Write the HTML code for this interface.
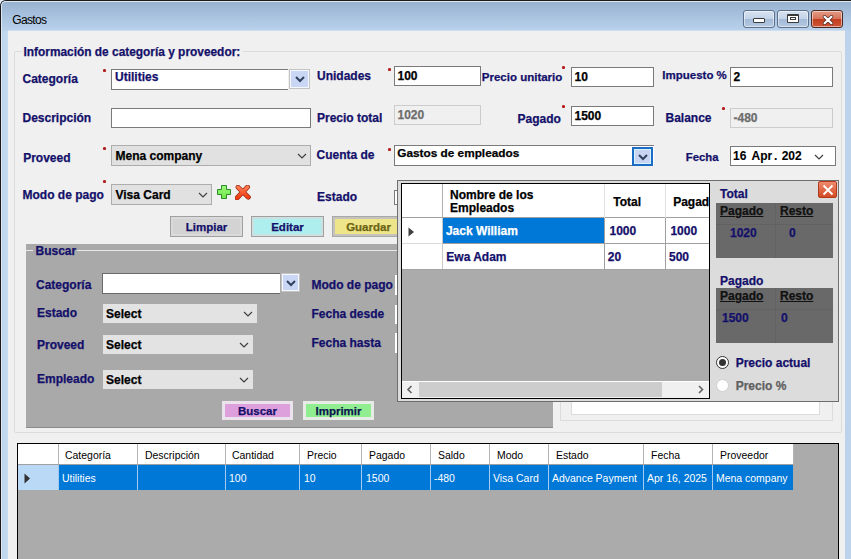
<!DOCTYPE html>
<html><head><meta charset="utf-8"><style>
html,body{margin:0;padding:0;width:851px;height:559px;overflow:hidden;background:#f0f0f0}
body{position:relative;font-family:"Liberation Sans", sans-serif}
div,svg{position:absolute}
.t{white-space:nowrap;-webkit-text-stroke:0.25px currentColor}
u{text-decoration-thickness:1px;text-underline-offset:1px}
</style></head><body>
<div style="left:0;top:0;width:851px;height:559px;background:#e8eef4"></div>
<div style="left:0;top:0;width:851px;height:559px;background:#bcd3eb;border-top-left-radius:6px"></div>
<div style="left:0;top:0;width:851px;height:31px;background:linear-gradient(#96b0cf,#bad2ec);border-top-left-radius:6px"></div>
<div style="left:1px;top:31px;width:7px;height:528px;background:linear-gradient(90deg,#bcd3eb,#c6dbf0)"></div>
<div style="left:0;top:0;width:851px;height:559px;border-left:1px solid #1a1a1a;border-top:1px solid #1a1a1a;border-top-left-radius:6px;box-sizing:border-box"></div>
<div style="left:1px;top:1px;width:850px;height:558px;border-left:1px solid #dfe8f2;border-top:1px solid #dfe8f2;border-top-left-radius:5px;box-sizing:border-box"></div>
<div style="left:8px;top:30px;width:837px;height:1px;background:#cfdff0"></div>
<div class="t" style="left:12.20px;top:14.14px;font-size:12px;line-height:12px;font-weight:normal;color:#000;-webkit-text-stroke:0;letter-spacing:-0.62px">Gastos</div>
<div style="left:743px;top:10px;width:32px;height:18px;border:1px solid #5d6f89;border-radius:3px;box-sizing:border-box;background:linear-gradient(#d6e2f0 0%,#c3d3e8 50%,#a3b9d6 51%,#b5c9e2 100%);box-shadow:inset 0 0 0 1px rgba(255,255,255,0.5)"><div style="left:9px;top:7px;width:12px;height:5px;background:#fff;border:1px solid #3a3a3a;border-radius:1px;box-sizing:border-box"></div></div>
<div style="left:777px;top:10px;width:32px;height:18px;border:1px solid #5d6f89;border-radius:3px;box-sizing:border-box;background:linear-gradient(#d6e2f0 0%,#c3d3e8 50%,#a3b9d6 51%,#b5c9e2 100%);box-shadow:inset 0 0 0 1px rgba(255,255,255,0.5)"><div style="left:9px;top:3px;width:12px;height:9px;background:#fff;border:1px solid #3a3a3a;border-top-width:2px;border-radius:1px;box-sizing:border-box"><div style="left:2px;top:1px;width:6px;height:3px;border:1px solid #3a3a3a;box-sizing:border-box;background:#fff"></div></div></div>
<div style="left:811px;top:10px;width:32px;height:18px;border:1px solid #4a2a20;border-radius:3px;box-sizing:border-box;background:linear-gradient(#e39a86 0%,#d8735a 50%,#bf3f1f 51%,#cf5536 100%);box-shadow:inset 0 0 0 1px rgba(255,255,255,0.5)"><svg style="position:absolute;left:9px;top:2px" width="14" height="13"><path d="M3.6,3.8 L10.4,10.2 M10.4,3.8 L3.6,10.2" stroke="#4a2a2a" stroke-width="3.6" stroke-linecap="round"/><path d="M3.6,3.8 L10.4,10.2 M10.4,3.8 L3.6,10.2" stroke="#fff" stroke-width="2.2" stroke-linecap="round"/></svg></div>
<div style="left:8px;top:31px;width:837px;height:528px;background:#f0f0f0"></div>
<div style="left:14px;top:51px;width:828px;height:382px;border:1px solid #dcdcdc;box-sizing:border-box;border-radius:2px"></div>
<div style="left:22px;top:44px;width:221px;height:14px;background:#f0f0f0"></div>
<div class="t" style="left:23.50px;top:46.63px;font-size:11.9px;line-height:11.9px;font-weight:bold;color:#14106a;">Información de categoría y proveedor:</div>
<div class="t" style="left:22.50px;top:72.84px;font-size:12px;line-height:12px;font-weight:bold;color:#14106a;">Categoría</div>
<div style="left:103px;top:69px;width:3px;height:3px;background:#b22020;border-radius:50%;box-shadow:0 0 0.6px #c04040"></div>
<div style="left:111px;top:69px;width:177px;height:21px;background:#fff;border:1px solid #7a7a7a;border-right:none;box-sizing:border-box"></div>
<div class="t" style="left:115.00px;top:70.84px;font-size:12px;line-height:12px;font-weight:bold;color:#14106a;">Utilities</div>
<div style="left:289px;top:69px;width:21px;height:20px;background:#c9d6f4;border:1px solid #c3c3c3;box-shadow:inset 0 0 0 1px #f4f8ff;box-sizing:border-box"></div>
<svg style="position:absolute;left:293.5px;top:74.0px" width="12" height="10"><polyline points="2,3 6,7 10,3" fill="none" stroke="#2f4260" stroke-width="2"/></svg>
<div class="t" style="left:317.00px;top:69.84px;font-size:12px;line-height:12px;font-weight:bold;color:#14106a;">Unidades</div>
<div style="left:388px;top:68px;width:3px;height:3px;background:#b22020;border-radius:50%;box-shadow:0 0 0.6px #c04040"></div>
<div style="left:394px;top:66px;width:87px;height:20px;background:#fff;border:1px solid #7a7a7a;box-sizing:border-box"></div>
<div class="t" style="left:397.50px;top:69.84px;font-size:12px;line-height:12px;font-weight:bold;color:#000;">100</div>
<div class="t" style="left:481.80px;top:71.97px;font-size:11.5px;line-height:11.5px;font-weight:bold;color:#14106a;">Precio unitario</div>
<div style="left:562px;top:66px;width:3px;height:3px;background:#b22020;border-radius:50%;box-shadow:0 0 0.6px #c04040"></div>
<div style="left:571px;top:67px;width:83px;height:20px;background:#fff;border:1px solid #7a7a7a;box-sizing:border-box"></div>
<div class="t" style="left:574.50px;top:70.84px;font-size:12px;line-height:12px;font-weight:bold;color:#000;">10</div>
<div class="t" style="left:662.30px;top:69.67px;font-size:11.5px;line-height:11.5px;font-weight:bold;color:#14106a;">Impuesto %</div>
<div style="left:730px;top:67px;width:103px;height:20px;background:#fff;border:1px solid #7a7a7a;box-sizing:border-box"></div>
<div class="t" style="left:733.50px;top:70.84px;font-size:12px;line-height:12px;font-weight:bold;color:#000;">2</div>
<div class="t" style="left:22.50px;top:112.34px;font-size:12px;line-height:12px;font-weight:bold;color:#14106a;">Descripción</div>
<div style="left:111px;top:108px;width:200px;height:20px;background:#fff;border:1px solid #7a7a7a;box-sizing:border-box"></div>
<div class="t" style="left:317.00px;top:111.84px;font-size:12px;line-height:12px;font-weight:bold;color:#14106a;">Precio total</div>
<div style="left:394px;top:105px;width:87px;height:20px;background:#f0f0f0;border:1px solid #cccccc;box-sizing:border-box"></div>
<div class="t" style="left:397.50px;top:108.84px;font-size:12px;line-height:12px;font-weight:bold;color:#6d6d6d;">1020</div>
<div class="t" style="left:517.50px;top:112.84px;font-size:12px;line-height:12px;font-weight:bold;color:#14106a;">Pagado</div>
<div style="left:562px;top:105px;width:3px;height:3px;background:#b22020;border-radius:50%;box-shadow:0 0 0.6px #c04040"></div>
<div style="left:571px;top:106px;width:83px;height:20px;background:#fff;border:1px solid #7a7a7a;box-sizing:border-box"></div>
<div class="t" style="left:574.50px;top:109.84px;font-size:12px;line-height:12px;font-weight:bold;color:#000;">1500</div>
<div class="t" style="left:665.50px;top:112.24px;font-size:12px;line-height:12px;font-weight:bold;color:#14106a;">Balance</div>
<div style="left:722px;top:107px;width:3px;height:3px;background:#b22020;border-radius:50%;box-shadow:0 0 0.6px #c04040"></div>
<div style="left:730px;top:108px;width:103px;height:20px;background:#f0f0f0;border:1px solid #cccccc;box-sizing:border-box"></div>
<div class="t" style="left:733.50px;top:111.84px;font-size:12px;line-height:12px;font-weight:bold;color:#6d6d6d;">-480</div>
<div class="t" style="left:23.20px;top:151.54px;font-size:12px;line-height:12px;font-weight:bold;color:#14106a;">Proveed</div>
<div style="left:103px;top:147px;width:3px;height:3px;background:#b22020;border-radius:50%;box-shadow:0 0 0.6px #c04040"></div>
<div style="left:111px;top:145px;width:200px;height:21px;background:#e1e1e1;border:1px solid #adadad;box-sizing:border-box"></div>
<div class="t" style="left:115.50px;top:149.84px;font-size:12px;line-height:12px;font-weight:bold;color:#000;">Mena company</div>
<svg style="position:absolute;left:297px;top:153px" width="10" height="6"><polyline points="1,1 5.0,5 9,1" fill="none" stroke="#404040" stroke-width="1.2"/></svg>
<div class="t" style="left:316.50px;top:148.84px;font-size:12px;line-height:12px;font-weight:bold;color:#14106a;">Cuenta de</div>
<div style="left:388px;top:148px;width:3px;height:3px;background:#b22020;border-radius:50%;box-shadow:0 0 0.6px #c04040"></div>
<div style="left:394px;top:145px;width:260px;height:21px;background:#fff;border:1px solid #7a7a7a;border-right:none;border-bottom:none;box-sizing:border-box"></div>
<div style="left:394px;top:165px;width:238px;height:1px;background:#7a7a7a"></div>
<div class="t" style="left:397.30px;top:147.51px;font-size:11.8px;line-height:11.8px;font-weight:bold;color:#000;">Gastos de empleados</div>
<div style="left:632px;top:147px;width:21px;height:19px;background:#c9d4f2;border:2px solid #1a6cc4;box-shadow:inset 0 0 0 1px #d6f2ff;box-sizing:border-box"></div>
<svg style="position:absolute;left:636.5px;top:151.5px" width="12" height="10"><polyline points="2,3 6,7 10,3" fill="none" stroke="#2f4260" stroke-width="2"/></svg>
<div class="t" style="left:685.80px;top:151.73px;font-size:11.3px;line-height:11.3px;font-weight:bold;color:#14106a;">Fecha</div>
<div style="left:730px;top:146px;width:106px;height:20px;background:#fff;border:1px solid #7a7a7a;box-sizing:border-box"></div>
<div class="t" style="left:733.00px;top:149.84px;font-size:12px;line-height:12px;font-weight:bold;color:#000;-webkit-text-stroke:0.1px #000">16</div>
<div class="t" style="left:751.50px;top:149.84px;font-size:12px;line-height:12px;font-weight:bold;color:#000;-webkit-text-stroke:0.1px #000">Apr</div>
<div class="t" style="left:773.90px;top:149.84px;font-size:12px;line-height:12px;font-weight:bold;color:#000;-webkit-text-stroke:0.1px #000">.</div>
<div class="t" style="left:781.70px;top:149.84px;font-size:12px;line-height:12px;font-weight:bold;color:#000;-webkit-text-stroke:0.1px #000">202</div>
<svg style="position:absolute;left:814px;top:154px" width="10" height="6"><polyline points="1,1 5.0,5 9,1" fill="none" stroke="#404040" stroke-width="1.2"/></svg>
<div class="t" style="left:22.50px;top:189.24px;font-size:12px;line-height:12px;font-weight:bold;color:#14106a;">Modo de pago</div>
<div style="left:103px;top:180px;width:3px;height:3px;background:#b22020;border-radius:50%;box-shadow:0 0 0.6px #c04040"></div>
<div style="left:111px;top:184px;width:101px;height:21px;background:#e1e1e1;border:1px solid #adadad;box-sizing:border-box"></div>
<div class="t" style="left:115.50px;top:188.84px;font-size:12px;line-height:12px;font-weight:bold;color:#000;">Visa Card</div>
<svg style="position:absolute;left:198px;top:192px" width="10" height="6"><polyline points="1,1 5.0,5 9,1" fill="none" stroke="#404040" stroke-width="1.2"/></svg>
<svg style="position:absolute;left:217px;top:185px" width="15" height="15"><defs><linearGradient id="gp" x1="0" y1="0" x2="0" y2="1"><stop offset="0" stop-color="#9cf878"/><stop offset="1" stop-color="#6ee848"/></linearGradient></defs><path d="M4.5,0.5 H9.5 V4.5 H13.5 V9.5 H9.5 V13.5 H4.5 V9.5 H0.5 V4.5 H4.5 Z" fill="url(#gp)" stroke="#2a8a2a" stroke-width="1"/></svg>
<svg style="position:absolute;left:235px;top:185px" width="16" height="15"><defs><linearGradient id="rx" x1="0" y1="0" x2="0" y2="1"><stop offset="0" stop-color="#ff7a50"/><stop offset="1" stop-color="#f03a10"/></linearGradient></defs><path d="M3,2.2 L13.4,12.2 M12.6,2 L2,13" stroke="#9a2a14" stroke-width="4.8" stroke-linecap="round"/><path d="M3,2.2 L13.4,12.2 M12.6,2 L2,13" stroke="url(#rx)" stroke-width="3.3" stroke-linecap="round"/></svg>
<div class="t" style="left:317.10px;top:191.24px;font-size:12px;line-height:12px;font-weight:bold;color:#14106a;">Estado</div>
<div style="left:394px;top:190px;width:10px;height:15px;background:#fff;border:1px solid #7a7a7a;box-sizing:border-box"></div>
<div style="left:170px;top:216px;width:73px;height:21px;background:#d3d3d3;border:1px solid #a0a0a0;box-sizing:border-box;box-shadow:inset 0 0 0 2px #dadada"></div>
<div class="t" style="left:170px;top:220.84px;width:73px;text-align:center;font-size:11.5px;line-height:12px;font-weight:bold;color:#14106a">Limpiar</div>
<div style="left:251px;top:216px;width:73px;height:21px;background:#afeeee;border:1px solid #a0a0a0;box-sizing:border-box;box-shadow:inset 0 0 0 2px #cde0e0"></div>
<div class="t" style="left:251px;top:220.84px;width:73px;text-align:center;font-size:11.5px;line-height:12px;font-weight:bold;color:#14106a">Editar</div>
<div style="left:332px;top:216px;width:73px;height:21px;background:#eee48a;border:1px solid #a8a8a8;box-sizing:border-box;box-shadow:inset 0 0 0 2px #c4c4bc"></div>
<div class="t" style="left:332px;top:220.84px;width:73px;text-align:center;font-size:11.5px;line-height:12px;font-weight:bold;color:#6b6414">Guardar</div>
<div style="left:26px;top:244px;width:527px;height:183px;background:#a9a9a9;box-sizing:border-box"></div>
<div style="left:26px;top:427px;width:527px;height:1px;background:#8c8c8c"></div>
<div style="left:26px;top:250px;width:7px;height:1px;background:#e8e8e8"></div>
<div style="left:77px;top:250px;width:476px;height:1px;background:#e8e8e8"></div>
<div class="t" style="left:35.50px;top:244.54px;font-size:12px;line-height:12px;font-weight:bold;color:#14106a;">Buscar</div>
<div class="t" style="left:36.00px;top:278.84px;font-size:12px;line-height:12px;font-weight:bold;color:#14106a;">Categoría</div>
<div style="left:102px;top:273px;width:178px;height:21px;background:#fff;border:1px solid #6a6a6a;border-right:none;box-sizing:border-box"></div>
<div style="left:281px;top:273px;width:19px;height:19px;background:#c9d6f4;border:1px solid #c3c3c3;box-shadow:inset 0 0 0 1px #f4f8ff;box-sizing:border-box"></div>
<svg style="position:absolute;left:284.5px;top:277.5px" width="12" height="10"><polyline points="2,3 6,7 10,3" fill="none" stroke="#2f4260" stroke-width="2"/></svg>
<div class="t" style="left:37.00px;top:306.84px;font-size:12px;line-height:12px;font-weight:bold;color:#14106a;">Estado</div>
<div style="left:103px;top:304px;width:154px;height:19px;background:#e3e3e3;border:1px solid #e3e3e3;box-sizing:border-box"></div>
<div class="t" style="left:106.10px;top:307.84px;font-size:12px;line-height:12px;font-weight:bold;color:#000;">Select</div>
<svg style="position:absolute;left:243px;top:311px" width="10" height="6"><polyline points="1,1 5.0,5 9,1" fill="none" stroke="#404040" stroke-width="1.2"/></svg>
<div class="t" style="left:37.00px;top:338.84px;font-size:12px;line-height:12px;font-weight:bold;color:#14106a;">Proveed</div>
<div style="left:103px;top:335px;width:150px;height:19px;background:#e3e3e3;border:1px solid #e3e3e3;box-sizing:border-box"></div>
<div class="t" style="left:106.10px;top:338.84px;font-size:12px;line-height:12px;font-weight:bold;color:#000;">Select</div>
<svg style="position:absolute;left:239px;top:342px" width="10" height="6"><polyline points="1,1 5.0,5 9,1" fill="none" stroke="#404040" stroke-width="1.2"/></svg>
<div class="t" style="left:37.00px;top:372.84px;font-size:12px;line-height:12px;font-weight:bold;color:#14106a;">Empleado</div>
<div style="left:103px;top:370px;width:150px;height:19px;background:#e3e3e3;border:1px solid #e3e3e3;box-sizing:border-box"></div>
<div class="t" style="left:106.10px;top:373.84px;font-size:12px;line-height:12px;font-weight:bold;color:#000;">Select</div>
<svg style="position:absolute;left:239px;top:377px" width="10" height="6"><polyline points="1,1 5.0,5 9,1" fill="none" stroke="#404040" stroke-width="1.2"/></svg>
<div class="t" style="left:311.50px;top:278.84px;font-size:12px;line-height:12px;font-weight:bold;color:#14106a;">Modo de pago</div>
<div class="t" style="left:311.50px;top:308.34px;font-size:12px;line-height:12px;font-weight:bold;color:#14106a;">Fecha desde</div>
<div class="t" style="left:311.50px;top:337.44px;font-size:12px;line-height:12px;font-weight:bold;color:#14106a;">Fecha hasta</div>
<div style="left:395px;top:275px;width:5px;height:20px;background:#fff"></div>
<div style="left:395px;top:305px;width:5px;height:19px;background:#fff"></div>
<div style="left:395px;top:333px;width:5px;height:20px;background:#fff"></div>
<div style="left:222px;top:401px;width:71px;height:19px;background:#dda0dd;border:1px solid #ebe3eb;box-sizing:border-box;box-shadow:inset 0 0 0 2px #ebe3eb"></div>
<div class="t" style="left:222px;top:404.84px;width:71px;text-align:center;font-size:11.5px;line-height:12px;font-weight:bold;color:#14106a">Buscar</div>
<div style="left:303px;top:401px;width:71px;height:19px;background:#90ee90;border:1px solid #e6ebe6;box-sizing:border-box;box-shadow:inset 0 0 0 2px #e6ebe6"></div>
<div class="t" style="left:303px;top:404.84px;width:71px;text-align:center;font-size:11.5px;line-height:12px;font-weight:bold;color:#0c1450">Imprimir</div>
<div style="left:560px;top:380px;width:273px;height:41px;border:1px solid #dcdcdc;box-sizing:border-box"></div>
<div style="left:571px;top:380px;width:249px;height:35px;background:#fff;border:1px solid #dcdcdc;box-sizing:border-box"></div>
<div style="left:397px;top:180px;width:442px;height:222px;background:#dcdcdc;border:1px solid #6e6e6e;box-sizing:border-box"></div>
<div style="left:401px;top:183px;width:309px;height:216px;background:#ababab;border:1px solid #000;box-sizing:border-box"></div>
<div style="left:402px;top:184px;width:307px;height:34px;background:#fff"></div>
<div style="left:402px;top:217px;width:307px;height:1px;background:#a0a0a0"></div>
<div style="left:442px;top:184px;width:1px;height:34px;background:#b0b0b0"></div>
<div style="left:604px;top:184px;width:1px;height:34px;background:#e0e0e0"></div>
<div style="left:665px;top:184px;width:1px;height:34px;background:#e0e0e0"></div>
<div class="t" style="left:450.10px;top:188.84px;font-size:12px;line-height:12px;font-weight:bold;color:#000;">Nombre de los</div>
<div class="t" style="left:450.10px;top:202.24px;font-size:12px;line-height:12px;font-weight:bold;color:#000;">Empleados</div>
<div class="t" style="left:613.20px;top:195.54px;font-size:12px;line-height:12px;font-weight:bold;color:#000;">Total</div>
<div class="t" style="left:673.20px;top:195.54px;font-size:12px;line-height:12px;font-weight:bold;color:#000;">Pagad</div>
<div style="left:709px;top:184px;width:1px;height:34px;background:#000"></div>
<div style="left:402px;top:218px;width:307px;height:51px;background:#fff"></div>
<div style="left:443px;top:218px;width:161px;height:25px;background:#0078d7"></div>
<div style="left:402px;top:243px;width:40px;height:1px;background:#dadada"></div>
<div style="left:443px;top:243px;width:266px;height:1px;background:#a0a0a0"></div>
<div style="left:402px;top:269px;width:307px;height:1px;background:#a4a4a4"></div>
<div style="left:442px;top:218px;width:1px;height:51px;background:#c8c8c8"></div>
<div style="left:604px;top:218px;width:1px;height:51px;background:#a0a0a0"></div>
<div style="left:665px;top:218px;width:1px;height:51px;background:#a0a0a0"></div>
<svg style="position:absolute;left:408px;top:227px" width="7" height="10"><path d="M0.5,0.5 L6,5 L0.5,9.5 Z" fill="#404040"/></svg>
<div class="t" style="left:445.90px;top:224.84px;font-size:12px;line-height:12px;font-weight:bold;color:#fff;">Jack William</div>
<div class="t" style="left:609.50px;top:224.84px;font-size:12px;line-height:12px;font-weight:bold;color:#14106a;">1000</div>
<div class="t" style="left:670.40px;top:224.84px;font-size:12px;line-height:12px;font-weight:bold;color:#14106a;">1000</div>
<div class="t" style="left:446.30px;top:250.84px;font-size:12px;line-height:12px;font-weight:bold;color:#14106a;">Ewa Adam</div>
<div class="t" style="left:607.80px;top:250.84px;font-size:12px;line-height:12px;font-weight:bold;color:#14106a;">20</div>
<div class="t" style="left:669.00px;top:250.84px;font-size:12px;line-height:12px;font-weight:bold;color:#14106a;">500</div>
<div style="left:402px;top:381px;width:307px;height:17px;background:#f0f0f0;border-top:1px solid #fff;box-sizing:border-box"></div>
<div style="left:419px;top:382px;width:243px;height:15px;background:#cdcdcd"></div>
<svg style="position:absolute;left:406px;top:385px" width="8" height="9"><polyline points="5.5,1 2,4.5 5.5,8" fill="none" stroke="#606060" stroke-width="1.6"/></svg>
<svg style="position:absolute;left:697px;top:385px" width="8" height="9"><polyline points="2,1 5.5,4.5 2,8" fill="none" stroke="#606060" stroke-width="1.6"/></svg>
<div class="t" style="left:720.00px;top:187.54px;font-size:12px;line-height:12px;font-weight:bold;color:#14106a;">Total</div>
<div style="left:818px;top:181px;width:19px;height:17px;background:linear-gradient(#f08a6e,#d24a24);border:1px solid #b03a1a;border-radius:2px;box-sizing:border-box"><svg style="position:absolute;left:3px;top:2px" width="12" height="12"><path d="M1.5,1.5 L10.5,10.5 M10.5,1.5 L1.5,10.5" stroke="#fff" stroke-width="1.8"/></svg></div>
<div style="left:716px;top:203px;width:117px;height:55px;background:#696969"></div>
<div style="left:716px;top:224px;width:117px;height:1px;background:#626262"></div>
<div style="left:775px;top:203px;width:1px;height:55px;background:#626262"></div>
<div class="t" style="left:720.10px;top:204.84px;font-size:12px;line-height:12px;font-weight:bold;color:#111;"><u>Pagado</u></div>
<div class="t" style="left:780.00px;top:204.84px;font-size:12px;line-height:12px;font-weight:bold;color:#111;"><u>Resto</u></div>
<div class="t" style="left:730.00px;top:226.84px;font-size:12px;line-height:12px;font-weight:bold;color:#14106a;">1020</div>
<div class="t" style="left:789.00px;top:226.84px;font-size:12px;line-height:12px;font-weight:bold;color:#14106a;">0</div>
<div class="t" style="left:720.00px;top:274.54px;font-size:12px;line-height:12px;font-weight:bold;color:#14106a;">Pagado</div>
<div style="left:716px;top:288px;width:117px;height:55px;background:#696969"></div>
<div style="left:716px;top:309px;width:117px;height:1px;background:#626262"></div>
<div style="left:775px;top:288px;width:1px;height:55px;background:#626262"></div>
<div class="t" style="left:720.10px;top:289.84px;font-size:12px;line-height:12px;font-weight:bold;color:#111;"><u>Pagado</u></div>
<div class="t" style="left:780.00px;top:289.84px;font-size:12px;line-height:12px;font-weight:bold;color:#111;"><u>Resto</u></div>
<div class="t" style="left:722.00px;top:311.84px;font-size:12px;line-height:12px;font-weight:bold;color:#14106a;">1500</div>
<div class="t" style="left:781.00px;top:311.84px;font-size:12px;line-height:12px;font-weight:bold;color:#14106a;">0</div>
<div style="left:716px;top:356px;width:13px;height:13px;border-radius:50%;background:#fff;border:1px solid #333;box-sizing:border-box"><div style="left:2px;top:2px;width:7px;height:7px;border-radius:50%;background:#333"></div></div>
<div class="t" style="left:735.70px;top:356.84px;font-size:12px;line-height:12px;font-weight:bold;color:#14106a;">Precio actual</div>
<div style="left:716px;top:379px;width:13px;height:13px;border-radius:50%;background:#fff;border:1px solid #cfcfcf;box-sizing:border-box"></div>
<div class="t" style="left:735.70px;top:379.84px;font-size:12px;line-height:12px;font-weight:bold;color:#606060;">Precio %</div>
<div style="left:17px;top:443px;width:822px;height:116px;background:#ababab;border:1px solid #000;border-bottom:none;box-sizing:border-box"></div>
<div style="left:18px;top:444px;width:776px;height:20px;background:#fff"></div>
<div style="left:18px;top:464px;width:776px;height:1px;background:#a0a0a0"></div>
<div style="left:18px;top:465px;width:775px;height:25px;background:#0078d7"></div>
<div style="left:18px;top:465px;width:40px;height:25px;background:#b9d9f6"></div>
<div style="left:58px;top:444px;width:1px;height:20px;background:#b4b4b4"></div>
<div style="left:58px;top:465px;width:1px;height:25px;background:#a6c9ef"></div>
<div style="left:137px;top:444px;width:1px;height:20px;background:#b4b4b4"></div>
<div style="left:137px;top:465px;width:1px;height:25px;background:#a6c9ef"></div>
<div style="left:225px;top:444px;width:1px;height:20px;background:#b4b4b4"></div>
<div style="left:225px;top:465px;width:1px;height:25px;background:#a6c9ef"></div>
<div style="left:299px;top:444px;width:1px;height:20px;background:#b4b4b4"></div>
<div style="left:299px;top:465px;width:1px;height:25px;background:#a6c9ef"></div>
<div style="left:361px;top:444px;width:1px;height:20px;background:#b4b4b4"></div>
<div style="left:361px;top:465px;width:1px;height:25px;background:#a6c9ef"></div>
<div style="left:430px;top:444px;width:1px;height:20px;background:#b4b4b4"></div>
<div style="left:430px;top:465px;width:1px;height:25px;background:#a6c9ef"></div>
<div style="left:489px;top:444px;width:1px;height:20px;background:#b4b4b4"></div>
<div style="left:489px;top:465px;width:1px;height:25px;background:#a6c9ef"></div>
<div style="left:548px;top:444px;width:1px;height:20px;background:#b4b4b4"></div>
<div style="left:548px;top:465px;width:1px;height:25px;background:#a6c9ef"></div>
<div style="left:643px;top:444px;width:1px;height:20px;background:#b4b4b4"></div>
<div style="left:643px;top:465px;width:1px;height:25px;background:#a6c9ef"></div>
<div style="left:712px;top:444px;width:1px;height:20px;background:#b4b4b4"></div>
<div style="left:712px;top:465px;width:1px;height:25px;background:#a6c9ef"></div>
<div style="left:793px;top:444px;width:1px;height:20px;background:#b4b4b4"></div>
<svg style="position:absolute;left:24px;top:473px" width="7" height="11"><path d="M0.5,0.5 L6,5.5 L0.5,10.5 Z" fill="#303030"/></svg>
<div class="t" style="left:65.10px;top:449.40px;font-size:11.7px;line-height:11.7px;font-weight:normal;color:#000;-webkit-text-stroke:0;transform:scaleX(0.895);transform-origin:0 0">Categoría</div>
<div class="t" style="left:144.90px;top:449.40px;font-size:11.7px;line-height:11.7px;font-weight:normal;color:#000;-webkit-text-stroke:0;transform:scaleX(0.895);transform-origin:0 0">Descripción</div>
<div class="t" style="left:231.50px;top:449.40px;font-size:11.7px;line-height:11.7px;font-weight:normal;color:#000;-webkit-text-stroke:0;transform:scaleX(0.895);transform-origin:0 0">Cantidad</div>
<div class="t" style="left:307.20px;top:449.40px;font-size:11.7px;line-height:11.7px;font-weight:normal;color:#000;-webkit-text-stroke:0;transform:scaleX(0.895);transform-origin:0 0">Precio</div>
<div class="t" style="left:369.10px;top:449.40px;font-size:11.7px;line-height:11.7px;font-weight:normal;color:#000;-webkit-text-stroke:0;transform:scaleX(0.895);transform-origin:0 0">Pagado</div>
<div class="t" style="left:437.80px;top:449.40px;font-size:11.7px;line-height:11.7px;font-weight:normal;color:#000;-webkit-text-stroke:0;transform:scaleX(0.895);transform-origin:0 0">Saldo</div>
<div class="t" style="left:497.10px;top:449.40px;font-size:11.7px;line-height:11.7px;font-weight:normal;color:#000;-webkit-text-stroke:0;transform:scaleX(0.895);transform-origin:0 0">Modo</div>
<div class="t" style="left:556.10px;top:449.40px;font-size:11.7px;line-height:11.7px;font-weight:normal;color:#000;-webkit-text-stroke:0;transform:scaleX(0.895);transform-origin:0 0">Estado</div>
<div class="t" style="left:651.00px;top:449.40px;font-size:11.7px;line-height:11.7px;font-weight:normal;color:#000;-webkit-text-stroke:0;transform:scaleX(0.895);transform-origin:0 0">Fecha</div>
<div class="t" style="left:720.30px;top:449.40px;font-size:11.7px;line-height:11.7px;font-weight:normal;color:#000;-webkit-text-stroke:0;transform:scaleX(0.895);transform-origin:0 0">Proveedor</div>
<div class="t" style="left:62.00px;top:472.40px;font-size:11.7px;line-height:11.7px;font-weight:normal;color:#fff;-webkit-text-stroke:0;transform:scaleX(0.895);transform-origin:0 0">Utilities</div>
<div class="t" style="left:228.50px;top:472.40px;font-size:11.7px;line-height:11.7px;font-weight:normal;color:#fff;-webkit-text-stroke:0;transform:scaleX(0.895);transform-origin:0 0">100</div>
<div class="t" style="left:303.70px;top:472.40px;font-size:11.7px;line-height:11.7px;font-weight:normal;color:#fff;-webkit-text-stroke:0;transform:scaleX(0.895);transform-origin:0 0">10</div>
<div class="t" style="left:365.80px;top:472.40px;font-size:11.7px;line-height:11.7px;font-weight:normal;color:#fff;-webkit-text-stroke:0;transform:scaleX(0.895);transform-origin:0 0">1500</div>
<div class="t" style="left:433.50px;top:472.40px;font-size:11.7px;line-height:11.7px;font-weight:normal;color:#fff;-webkit-text-stroke:0;transform:scaleX(0.895);transform-origin:0 0">-480</div>
<div class="t" style="left:492.90px;top:472.40px;font-size:11.7px;line-height:11.7px;font-weight:normal;color:#fff;-webkit-text-stroke:0;transform:scaleX(0.895);transform-origin:0 0">Visa Card</div>
<div class="t" style="left:551.70px;top:472.40px;font-size:11.7px;line-height:11.7px;font-weight:normal;color:#fff;-webkit-text-stroke:0;transform:scaleX(0.895);transform-origin:0 0">Advance Payment</div>
<div class="t" style="left:646.70px;top:472.40px;font-size:11.7px;line-height:11.7px;font-weight:normal;color:#fff;-webkit-text-stroke:0;transform:scaleX(0.895);transform-origin:0 0">Apr 16, 2025</div>
<div class="t" style="left:716.00px;top:472.40px;font-size:11.7px;line-height:11.7px;font-weight:normal;color:#fff;-webkit-text-stroke:0;transform:scaleX(0.895);transform-origin:0 0">Mena company</div>
</body></html>
